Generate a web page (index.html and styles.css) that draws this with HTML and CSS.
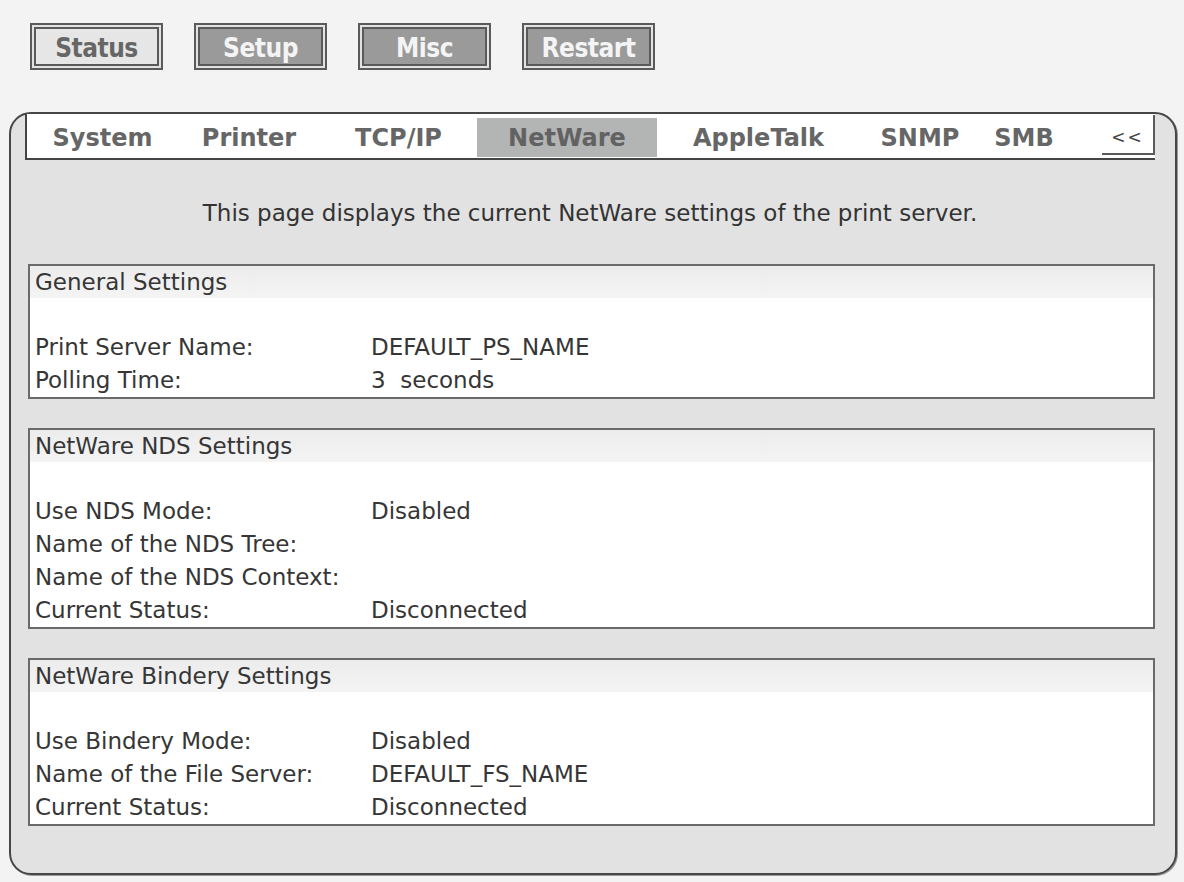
FILE: index.html
```html
<!DOCTYPE html>
<html>
<head>
<meta charset="utf-8">
<title>NetWare Settings</title>
<link rel="stylesheet" href="styles.css">
</head>
<body>
<div class="topnav">
  <div class="btn btn-active">Status</div>
  <div class="btn">Setup</div>
  <div class="btn">Misc</div>
  <div class="btn">Restart</div>
</div>
<div class="frame">
  <div class="tabbar">
    <div class="tab">System</div>
    <div class="tab">Printer</div>
    <div class="tab">TCP/IP</div>
    <div class="tab selected">NetWare</div>
    <div class="tab">AppleTalk</div>
    <div class="tab">SNMP</div>
    <div class="tab">SMB</div>
    <div class="tab-gap"></div>
    <div class="collapse">&lt;&lt;</div>
  </div>
  <p class="intro">This page displays the current NetWare settings of the print server.</p>

  <section class="box">
    <div class="box-head">General Settings</div>
    <div class="row"></div>
    <div class="row"><span>Print Server Name:</span><span>DEFAULT_PS_NAME</span></div>
    <div class="row"><span>Polling Time:</span><span>3&nbsp; seconds</span></div>
  </section>

  <section class="box">
    <div class="box-head">NetWare NDS Settings</div>
    <div class="row"></div>
    <div class="row"><span>Use NDS Mode:</span><span>Disabled</span></div>
    <div class="row"><span>Name of the NDS Tree:</span><span></span></div>
    <div class="row"><span>Name of the NDS Context:</span><span></span></div>
    <div class="row"><span>Current Status:</span><span>Disconnected</span></div>
  </section>

  <section class="box">
    <div class="box-head">NetWare Bindery Settings</div>
    <div class="row"></div>
    <div class="row"><span>Use Bindery Mode:</span><span>Disabled</span></div>
    <div class="row"><span>Name of the File Server:</span><span>DEFAULT_FS_NAME</span></div>
    <div class="row"><span>Current Status:</span><span>Disconnected</span></div>
  </section>
</div>
</body>
</html>
```
FILE: styles.css
```css
html, body {
  margin: 0;
  padding: 0;
}
body {
  background: #f3f3f3;
  font-family: "DejaVu Sans", "Liberation Sans", sans-serif;
  color: #363636;
  width: 1184px;
  height: 882px;
  overflow: hidden;
}

.topnav {
  display: flex;
  gap: 31px;
  padding: 23px 0 0 30px;
  height: 47px;
}
.btn {
  width: 133px;
  height: 47px;
  box-sizing: border-box;
  border: 2px solid #5a5a5a;
  box-shadow: inset 0 0 0 2px #e2e2e2, inset 0 0 0 4px #5a5a5a;
  background: #9a9a9a;
  color: #f4f4f4;
  font-family: "DejaVu Sans Condensed", "DejaVu Sans", sans-serif;
  font-weight: bold;
  font-size: 26px;
  letter-spacing: -0.5px;
  display: flex;
  align-items: center;
  justify-content: center;
  padding-top: 2px;
}
.btn-active {
  background: #e6e6e6;
  color: #666;
}

.frame {
  margin: 42px 0 0 9px;
  width: 1168px;
  height: 763px;
  box-sizing: border-box;
  border: 2px solid #474747;
  border-radius: 22px;
  box-shadow: 1px 1px 0 #9a9a9a;
  background: #e2e2e2;
  padding: 0 20px 0 14px;
}

.tabbar {
  display: grid;
  grid-template-columns: 151px 142px 157px 180px 203px 120px 88px 1fr 53px;
  height: 46px;
  box-sizing: border-box;
  border-left: 2px solid #444;
  border-bottom: 2px solid #444;
  background: #fff;
  padding: 4px 0 1px;
}
.tab {
  display: flex;
  align-items: center;
  justify-content: center;
  font-weight: bold;
  font-size: 24px;
  color: #666;
}
.tab.selected {
  background: #b3b5b5;
  color: #626262;
}
.collapse {
  margin: -3px 0 2px;
  padding-top: 5px;
  box-sizing: border-box;
  background: #fff;
  border-right: 2px solid #5a5a5a;
  border-bottom: 2px solid #5a5a5a;
  display: flex;
  align-items: center;
  justify-content: center;
  font-size: 17px;
  letter-spacing: 2px;
  color: #444;
}

.intro {
  margin: 40px 0 0;
  line-height: 26px;
  font-size: 23px;
  text-align: center;
  color: #333;
}

.box {
  margin: 38px 0 0 3px;
  border: 2px solid #6a6a6a;
  background: #fff;
  font-size: 23px;
}
.box + .box {
  margin-top: 29px;
}
.box-head {
  height: 32px;
  line-height: 32px;
  padding-left: 5px;
  background: linear-gradient(#ececec, #f4f4f4);
}
.row {
  display: grid;
  grid-template-columns: 336px 1fr;
  height: 33px;
  line-height: 33px;
  padding-left: 5px;
}
```
